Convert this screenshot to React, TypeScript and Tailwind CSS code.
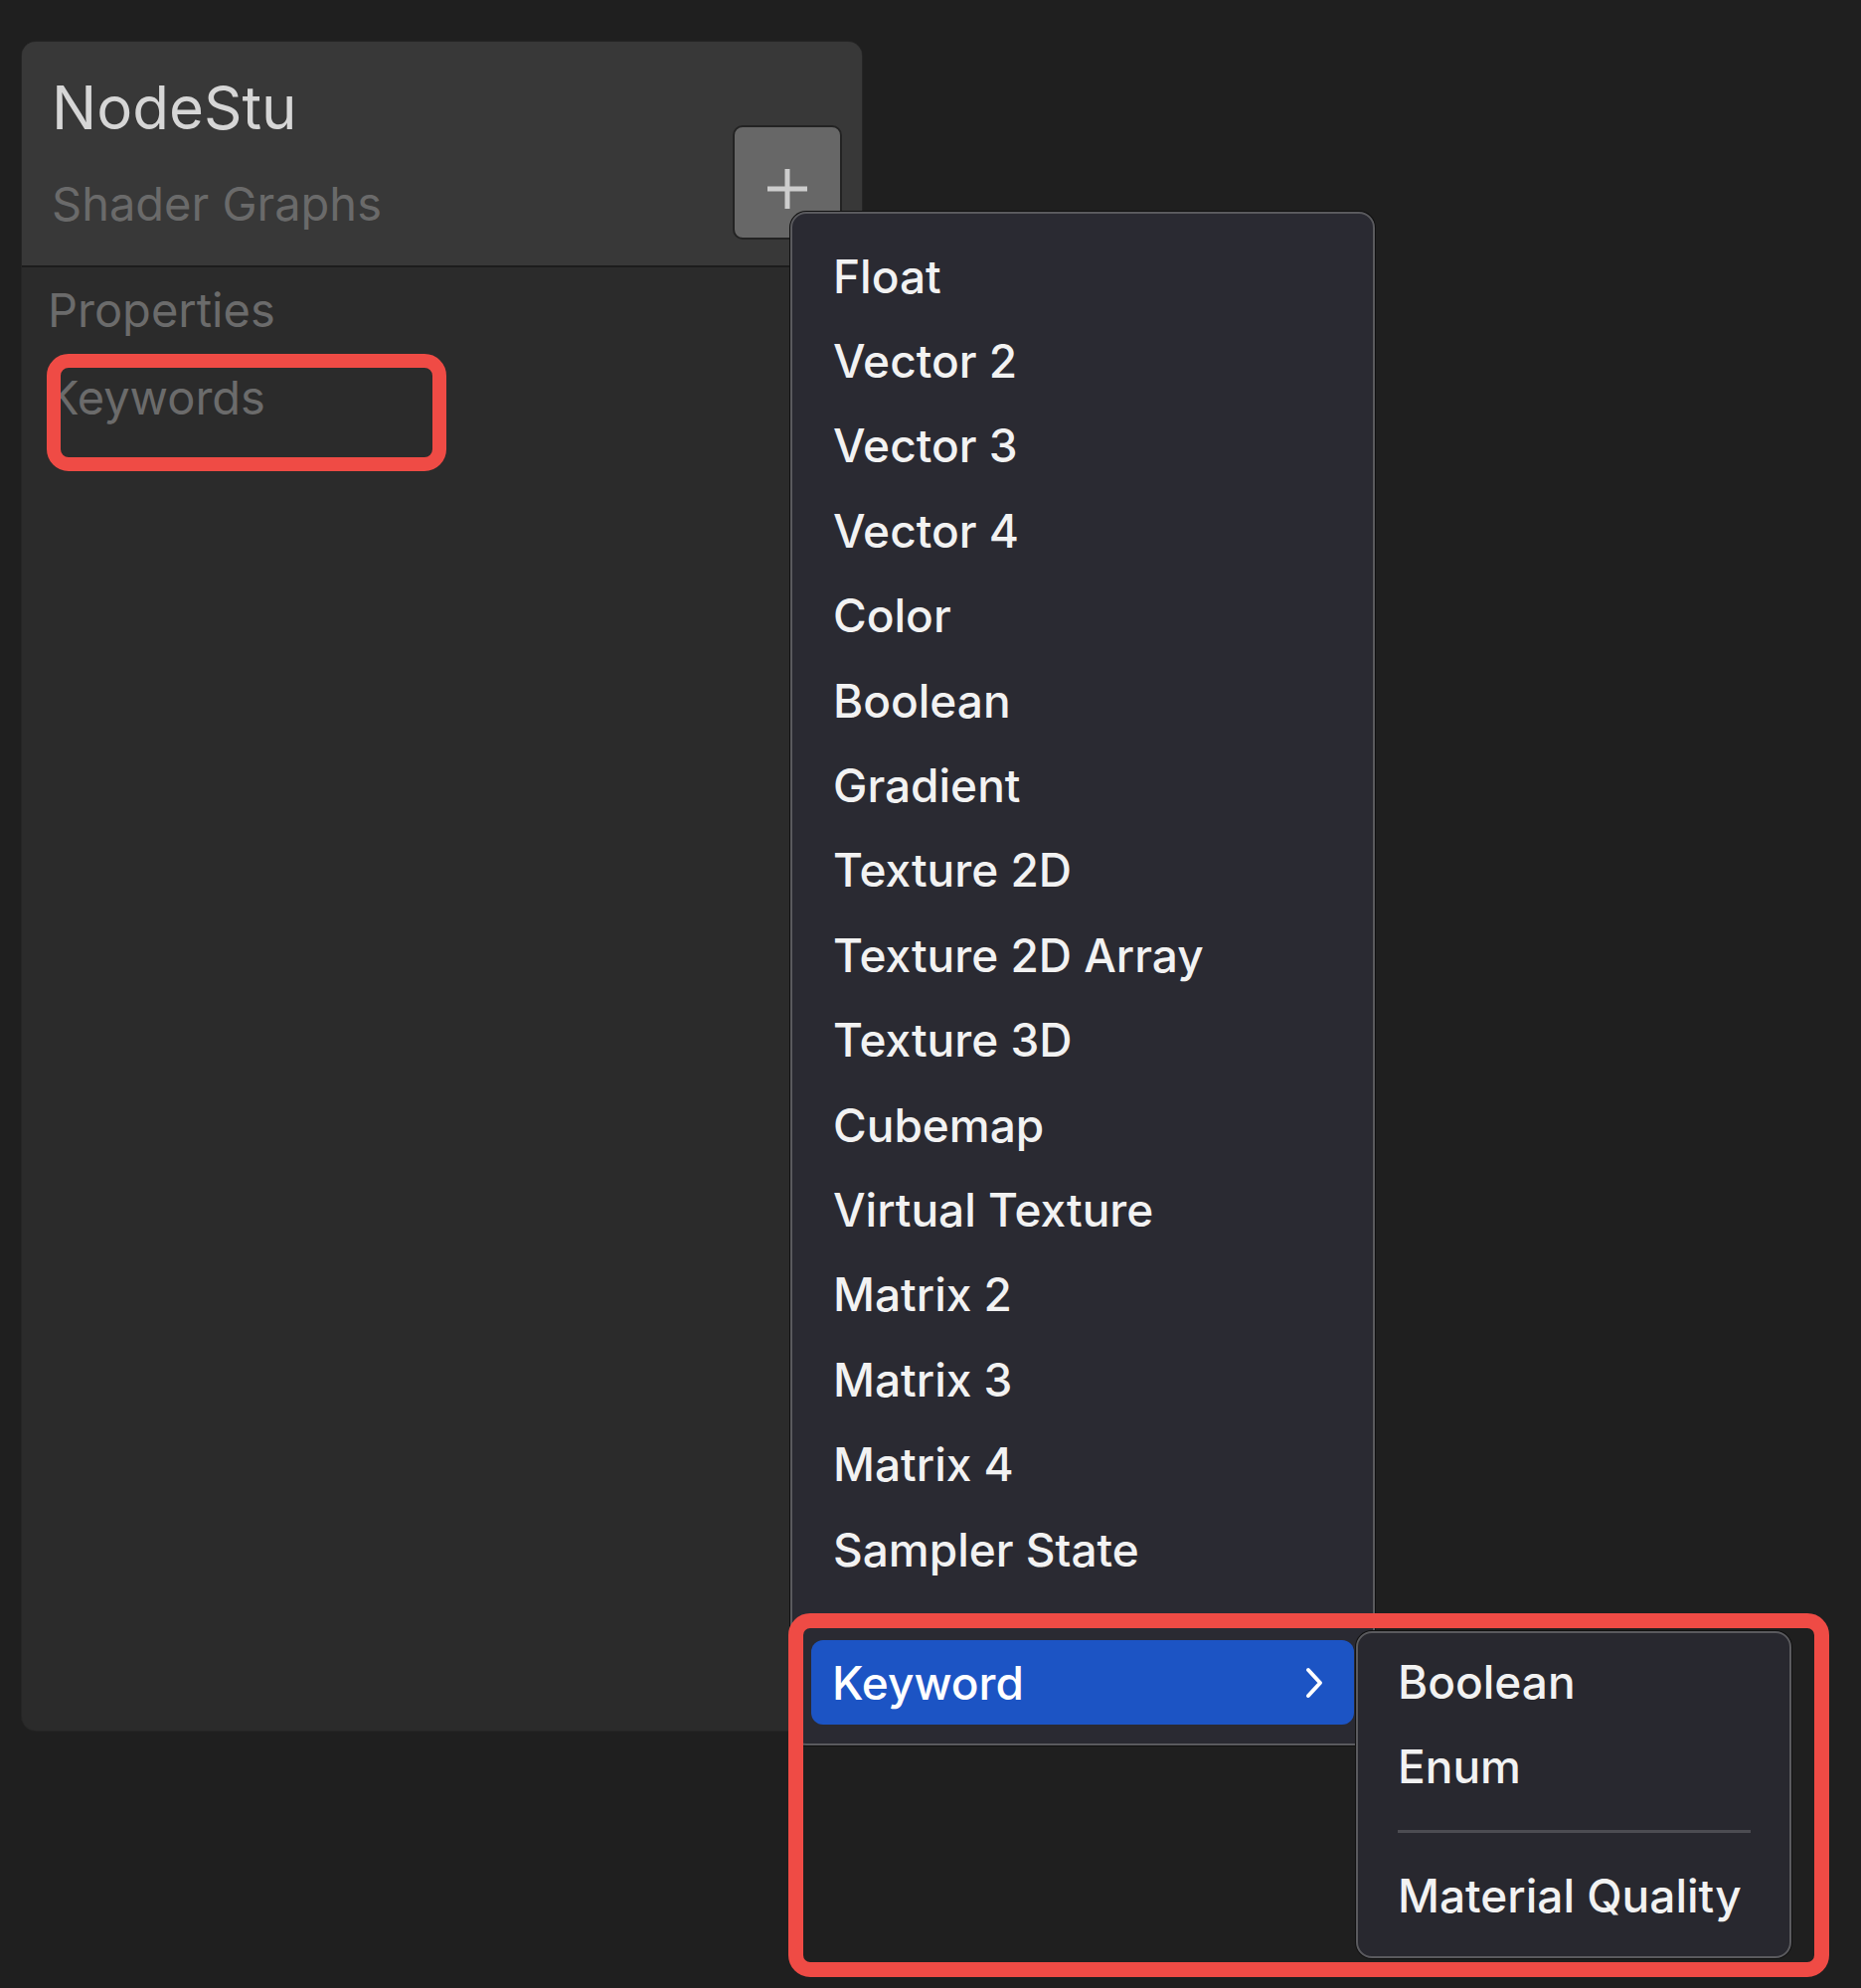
import React from "react";

const items = [
    "Float",
    "Vector 2",
    "Vector 3",
    "Vector 4",
    "Color",
    "Boolean",
    "Gradient",
    "Texture 2D",
    "Texture 2D Array",
    "Texture 3D",
    "Cubemap",
    "Virtual Texture",
    "Matrix 2",
    "Matrix 3",
    "Matrix 4",
    "Sampler State",
];

const font = { fontFamily: "Inter, 'Noto Sans', sans-serif" };

function MenuItem({ label }: { label: string }) {
    return (
        <div className="flex items-center h-[85.4px] pl-[41px] text-[46px] font-medium text-[#f2f2f2] leading-none">
            {label}
        </div>
    );
}

export default function App() {
    return (
        <div
            className="relative w-[1872px] h-[2000px] bg-[#1f1f1f] pt-[42px] pl-[22px] overflow-hidden"
            style={font}
        >
            {/* side panel */}
            <div className="flex flex-col w-[845px] h-[1699px] rounded-[14px] overflow-hidden bg-[#2b2b2b] shadow-[0_0_0_1px_#252525]">
                <div className="flex justify-between h-[227px] bg-[#383838] border-b-2 border-[#1c1c1c]">
                    <div className="flex flex-col pl-[30px] pt-[36px]">
                        <span className="text-[60px] leading-[60px] text-[#d6d6d6]">NodeStu</span>
                        <span className="mt-[39px] text-[47px] leading-[56px] text-[#6a6a6a]">Shader Graphs</span>
                    </div>
                    <button className="self-end mb-[26px] mr-[20px] w-[110px] h-[115px] rounded-[10px] bg-[#676767] border-2 border-[#232323] flex items-center justify-center pt-[12px]">
                        <svg width="44" height="44" viewBox="0 0 44 44">
                            <path d="M22 2v40M2 22h40" stroke="#cdcdcd" strokeWidth="5" />
                        </svg>
                    </button>
                </div>
                <div className="flex flex-col pl-[26px] pt-[15px]">
                    <span className="text-[47px] leading-[56px] text-[#6b6b6b]">Properties</span>
                    <span className="mt-[32px] text-[47px] leading-[56px] text-[#6b6b6b]">Keywords</span>
                </div>
            </div>

            {/* highlight around Keywords */}
            <div className="absolute left-[47px] top-[356px] w-[402px] h-[118px] border-[14px] border-[#ef4b45] rounded-[22px]" />

            {/* add-property menu */}
            <div className="absolute left-[795px] top-[213px] w-[588px] h-[1543px] rounded-[16px] bg-[#2a2a32] border-2 border-[#5a5a5e] shadow-[0_0_0_1px_#111] flex flex-col pt-[20px]">
                {items.map((label) => (
                    <MenuItem key={label} label={label} />
                ))}
                <div className="h-[49px] flex items-center px-[44px]">
                    <div className="w-full h-[2px] bg-[#45454b]" />
                </div>
                <div className="mx-[19px] h-[85px] rounded-[12px] bg-[#1c54c4] flex items-center justify-between pl-[21px] pr-[30px] text-[46px] font-medium text-white leading-none">
                    Keyword
                    <svg width="20" height="34" viewBox="0 0 20 34">
                        <path d="M4 4l12 13L4 30" fill="none" stroke="#ffffff" strokeWidth="4" strokeLinecap="round" strokeLinejoin="round" />
                    </svg>
                </div>
            </div>

            {/* keyword submenu */}
            <div className="absolute left-[1364px] top-[1641px] w-[438px] h-[329px] rounded-[16px] bg-[#28282f] border-2 border-[#5a5a5e] shadow-[0_0_0_1px_#111] flex flex-col pt-[6px]">
                <div className="flex items-center h-[85.4px] pl-[40px] text-[46px] font-medium text-[#f2f2f2] leading-none">Boolean</div>
                <div className="flex items-center h-[85.4px] pl-[40px] text-[46px] font-medium text-[#f2f2f2] leading-none">Enum</div>
                <div className="h-[45px] flex items-center pl-[40px] pr-[39px]">
                    <div className="w-full h-[3px] bg-[#4c4c52]" />
                </div>
                <div className="flex items-center h-[85.4px] pl-[40px] text-[46px] font-medium text-[#f2f2f2] leading-none">Material Quality</div>
            </div>

            {/* highlight around submenu */}
            <div className="absolute left-[793px] top-[1623px] w-[1047px] h-[366px] border-[15px] border-[#ef4b45] rounded-[22px]" />
        </div>
    );
}
